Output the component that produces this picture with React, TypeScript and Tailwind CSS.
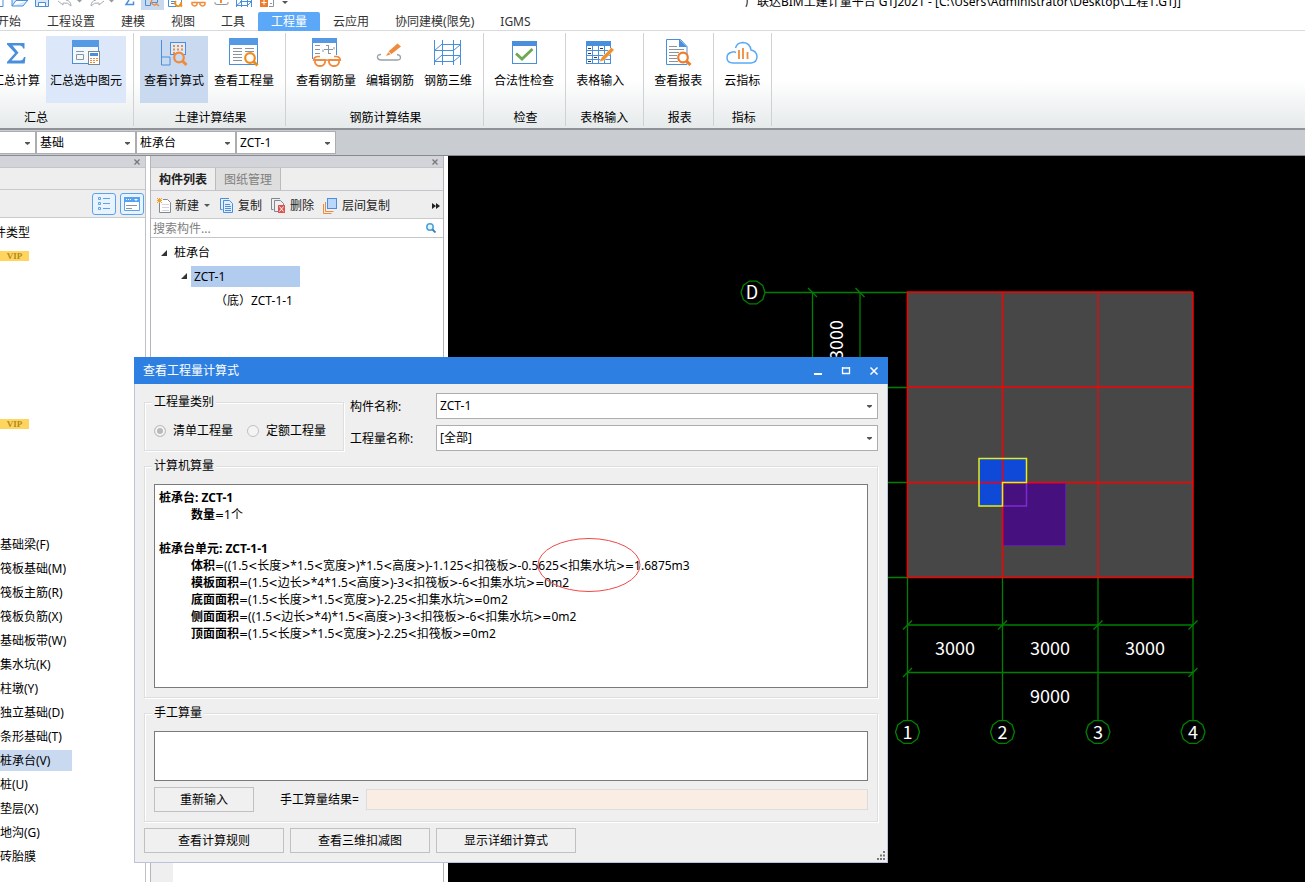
import React from 'react';
import clsx from 'clsx';

const BLUE = '#4a8fdc';
const ORANGE = '#f08a3c';

interface ComboProps {
  label: string;
  value: string;
  id?: string;
  className?: string;
}

const Combo: React.FC<ComboProps> = ({ label, value, id, className }) => (
  <div className={clsx('relative', className)}>
    <select
      id={id}
      aria-label={id ? undefined : label}
      className="block size-full appearance-none border border-[#adadad] bg-white pl-[3px] pr-5 text-black outline-none"
    >
      <option>{value}</option>
    </select>
    <svg className="pointer-events-none absolute right-[6px] top-1/2 -mt-px h-[3px] w-[5px]" viewBox="0 0 5 3">
      <path d="M0 0h5v1L2.500 3 0 1z" fill="#555" />
    </svg>
  </div>
);

const Magnifier = ({ x, y, color = ORANGE }: { x: number; y: number; color?: string }) => (
  <g stroke={color} fill="none">
    <circle cx={x} cy={y} r="4.800" strokeWidth="2.200" />
    <path d={`M${x + 3.5} ${y + 3.5}l4 4`} strokeWidth="3" />
  </g>
);

const icons: Record<string, React.ReactNode> = {
  sigma: <path d="M7 6h17.500v5.500h-1.500q-.5-3-3.500-3h-7l6 7.200-7 7.800h8.500q3 0 4-3.500h1.500l-.8 6.500H7v-1.500l8-9L7 7.500z" fill={BLUE} />,
  selected: (
    <>
      <rect x="2.500" y="3.500" width="26" height="23" fill="#f3f8fe" stroke={BLUE} />
      <path d="M2 3h27v7H2z" fill="#5598e4" />
      <path d="M6 14.500h8M6.500 17.500h7v5h-7z" fill="none" stroke="#8a949c" />
      <rect x="18.500" y="14.500" width="11" height="13" fill="#fff" stroke="#7b868e" />
      <path d="M20 16h8v3h-8z" fill={BLUE} />
      <path d="M20 21.500h8M20 23.500h8M20 25.500h5" stroke={ORANGE} strokeDasharray="2 1" />
    </>
  ),
  formula: (
    <>
      <path d="M3.500 3v25h8.500v-8H3.500" fill="none" stroke={BLUE} />
      <rect x="12.500" y="5.500" width="15" height="12" fill="#dfeafa" stroke={BLUE} />
      <path d="M15 9h11M15 12.500h11M15 16h4" stroke={ORANGE} strokeWidth="2" strokeDasharray="2 2" />
      <circle cx="21" cy="20.500" r="4" fill="#c9d9ef" />
      <Magnifier x={21} y={20.5} />
    </>
  ),
  quantity: (
    <>
      <rect x="1.500" y="1.500" width="28" height="26" fill="#fff" stroke={BLUE} />
      <path d="M1 1h29v7H1z" fill="#5598e4" />
      <path d="M5 11.500h9M17 11.500h9M5 14.500h9M17 14.500h9M5 17.500h9M5 20.500h9M5 23.500h9" stroke="#8a949c" />
      <circle cx="22" cy="21" r="5" fill="#fff" />
      <Magnifier x={22} y={21} color="#ef8d1c" />
    </>
  ),
  rebar: (
    <>
      <path d="M2.500 22V3.500h24V18" fill="#fff" stroke={BLUE} />
      <path d="M2 1h25v5H2z" fill="#5598e4" />
      <path d="M5 8.500h5M5 12.500h5M5 16.500h5M18.500 8v9M14 12.500h9M13 12.500v2.500M24 12.500V10M16 8.500h2.500M18.500 16.500H21" fill="none" stroke="#8a949c" />
      <path d="M3.500 24q0-4 4-4.500h2.500M30.500 24q0-4-4-4.500H24M15 23.500q2-1 4 0" fill="none" stroke={ORANGE} strokeWidth="1.500" />
      <path d="M5 23h10v2.500q-1 3.500-5 3.500t-5-3.500zM19 23h10v2.500q-1 3.500-5 3.500t-5-3.500z" fill="#fff" stroke={ORANGE} strokeWidth="1.800" />
    </>
  ),
  edit: (
    <>
      <path d="M7 17.500q-4 0-3.500 3 .5 2.500 3.500 2.500h16q3.500 0 3.500-2.500t-3.500-3" fill="none" stroke="#98a3aa" strokeWidth="1.300" />
      <path d="M12 19l3-5 8.500-7.500 3.500 3L17.500 17z" fill={ORANGE} />
      <path d="M14 14.500l3 2.700" stroke="#fff" />
    </>
  ),
  cage: (
    <path
      d="M2.500 3v25M10.500 3v25M21.500 3v25M28.500 3v25M2 13.500h20M2 24.500h20M9 7.500h20M9 18.500h20M2.500 13.500l7-6M21.500 13.500l7-6M2.500 24.500l7-6M21.500 24.500l7-6"
      fill="none"
      stroke={BLUE}
    />
  ),
  check: (
    <>
      <rect x="4.500" y="4.500" width="24" height="22" fill="#fff" stroke={BLUE} />
      <path d="M4 4h25v5H4z" fill={BLUE} />
      <path d="M8 16.500l6 5.500L24.500 12" fill="none" stroke="#6fa84f" strokeWidth="2.800" />
    </>
  ),
  table: (
    <>
      <rect x="2.500" y="4.500" width="24" height="22" fill="#fff" stroke={BLUE} />
      <path d="M2 4h25v5H2z" fill={BLUE} />
      <path d="M3 13.500h23M3 18.500h23M3 22.500h23M8.500 9v18M14.500 9v18M20.500 9v18" stroke={BLUE} />
      <path d="M4 11.500h3M16 11.500h3M4 16.500h3M10 20.500h3M4 24.500h3" stroke="#335" />
      <path d="M15 25l2.500-4.500L27.500 10.500l2.800 2.500L20 23.500z" fill="#f0912a" stroke="#fff" strokeWidth=".5" />
    </>
  ),
  report: (
    <>
      <path d="M4.500 2.500h14l6.500 7v18h-20.500z" fill="#fff" stroke={BLUE} />
      <path d="M17 2l8 8h-8z" fill={BLUE} />
      <path d="M7 9.500h8M7 12.500h15M7 15.500h10M7 18.500h8M7 21.500h8M7 24.500h9" stroke="#8a949c" />
      <circle cx="21" cy="20.500" r="5" fill="#fff" />
      <Magnifier x={21} y={20.5} color="#ee7c2c" />
    </>
  ),
  cloud: (
    <>
      <path d="M10 15.500Q8 14.500 6.500 15 1 16 1 20.500 1 26 7 26h18q6-.5 6-6.500-.5-5.500-6-6.500Q24 6 17 5.500 11 5.500 9.500 11" fill="none" stroke="#5aaaf5" strokeWidth="1.500" />
      <path d="M13 13v9M17 11v11M21.500 15v7" stroke={ORANGE} strokeWidth="1.800" />
    </>
  ),
};

interface Tool {
  icon: string;
  label: string;
  state?: 'hover' | 'active';
}

const groups: { title: string; className: string; tools: Tool[] }[] = [
  {
    title: '汇总',
    className: '-ml-[62px] pl-[50px] pr-[7px]',
    tools: [
      { icon: 'sigma', label: '汇总计算' },
      { icon: 'selected', label: '汇总选中图元', state: 'hover' },
    ],
  },
  {
    title: '土建计算结果',
    className: 'pl-[6px] pr-[7px]',
    tools: [
      { icon: 'formula', label: '查看计算式', state: 'active' },
      { icon: 'quantity', label: '查看工程量' },
    ],
  },
  {
    title: '钢筋计算结果',
    className: 'pl-[6px] pr-[7px]',
    tools: [
      { icon: 'rebar', label: '查看钢筋量' },
      { icon: 'edit', label: '编辑钢筋' },
      { icon: 'cage', label: '钢筋三维' },
    ],
  },
  { title: '检查', className: 'pl-[6px] pr-[7px]', tools: [{ icon: 'check', label: '合法性检查' }] },
  { title: '表格输入', className: 'pl-[6px] pr-[15px]', tools: [{ icon: 'table', label: '表格输入' }] },
  { title: '报表', className: 'pl-[6px] pr-[7px]', tools: [{ icon: 'report', label: '查看报表' }] },
  { title: '指标', className: 'pl-[6px] pr-[7px]', tools: [{ icon: 'cloud', label: '云指标' }] },
];

const tabs = ['开始', '工程设置', '建模', '视图', '工具', '工程量', '云应用', '协同建模(限免)', 'IGMS'];

const quickTools: { name: string; art: React.ReactNode; active?: boolean; narrow?: boolean }[] = [
  { name: '新建', art: <path d="M8 0v6.500h10V0" fill="none" stroke={BLUE} /> },
  { name: '打开', art: <path d="M4 0v6h11l5-6M4 6l4-5.500h12" fill="#d8e9fb" stroke={BLUE} /> },
  { name: '保存', art: <path d="M4.500 0v6.500h13V0M7.500 6V2.500h7V6" fill="#d8e9fb" stroke={BLUE} /> },
  { name: '撤销', art: <path d="M4 1l5 4V3q5-1 8 3 0-5-5-6" fill="none" stroke="#a5acb2" /> },
  { name: '撤销列表', narrow: true, art: <path d="M0 0h5L2.500 2.500z" fill="#999" /> },
  { name: '恢复', art: <path d="M18 1l-5 4V3Q8 2 5 6q0-5 5-6" fill="none" stroke="#a5acb2" /> },
  { name: '恢复列表', narrow: true, art: <path d="M0 0h5L2.500 2.500z" fill="#999" /> },
  { name: '汇总计算', art: <path d="M11 0l-3 4.500h7.500V1.500" fill="none" stroke={BLUE} strokeWidth="1.500" /> },
  {
    name: '查看计算式',
    active: true,
    art: (
      <>
        <path d="M4.500 0v5.500h5V2.500h7V0" fill="none" stroke={BLUE} />
        <path d="M11 0a3 3 0 0 0 5 3.500M15 3.500l3 2.500" fill="none" stroke={ORANGE} strokeWidth="1.500" />
      </>
    ),
  },
  {
    name: '查看工程量',
    art: (
      <>
        <path d="M4.500 0v6.500h8M17.500 0v2M7 1.500h4M7 3.500h4" fill="none" stroke={BLUE} />
        <path d="M12 1a3 3 0 1 0 5 1M15.500 4l2.500 2.500" fill="none" stroke="#ef8d1c" strokeWidth="1.800" />
      </>
    ),
  },
  { name: '查看钢筋量', art: <path d="M5 2.500h5v2q-2 3-5 0zM13 2.500h5v2q-2 3-5 0zM10 2.500h3" fill="none" stroke={ORANGE} strokeWidth="1.400" /> },
  {
    name: '编辑钢筋',
    art: (
      <>
        <path d="M5 2q-1 2.500 2 2.500h9q3 0 2-2.500" fill="none" stroke="#8a949c" />
        <path d="M11 0v3" stroke={ORANGE} strokeWidth="2" />
      </>
    ),
  },
  { name: '钢筋三维', art: <path d="M3.500 0v7M8.500 0v7M14.500 0v7M18.500 0v7M3 5.500h12M7 1.500h12M3.500 5.500l5-4M14.500 5.500l4-4" stroke={BLUE} /> },
  {
    name: '插件',
    art: (
      <>
        <path d="M4 0h8v7H4z" fill="#ee7c2c" />
        <path d="M8 0v5M5.500 2.500h5" stroke="#fff" />
        <path d="M13 6.500h4.500V0M14 3.500h2" fill="none" stroke="#8a949c" />
      </>
    ),
  },
  { name: '自定义', narrow: true, art: <path d="M3 1h6L6 4z" fill="#555" /> },
];

const TitleBar = () => (
  <header className="flex h-[12px] items-end overflow-hidden bg-white">
    <div className="-ml-[15px] flex h-[12px]">
      {quickTools.map((t) => (
        <button key={t.name} aria-label={t.name} className={clsx('h-[10px]', t.active && 'bg-[#c9daef]')}>
          {t.narrow ? (
            <svg className="h-[10px] w-[9px]" viewBox="0 0 9 10">{t.art}</svg>
          ) : (
            <svg className="h-[10px] w-[23px]" viewBox="0 0 23 10">{t.art}</svg>
          )}
        </button>
      ))}
    </div>
    <h1 className="ml-auto mr-[124px] whitespace-nowrap pb-[2px] leading-4">
      广联达BIM土建计量平台 GTJ2021 - [C:\Users\Administrator\Desktop\工程1.GTJ]
    </h1>
  </header>
);

const Ribbon = () => (
  <>
    <nav className="flex h-[19px] border-b border-[#d9dadb] bg-white">
      <div className="-ml-4 flex">
        {tabs.map((tab) => (
          <button
            key={tab}
            className={clsx(
              'h-[19px] whitespace-nowrap px-[13px] leading-[19px]',
              tab === '工程量' ? 'rounded-t-xs bg-[#5ba7f8] text-white' : 'text-[#333]',
            )}
          >
            {tab}
          </button>
        ))}
      </div>
    </nav>
    <div className="flex h-[97px] bg-linear-to-b from-white from-50% to-[#e6eaeb] py-[2px]">
      {groups.map((g) => (
        <section
          key={g.title}
          className={clsx('flex flex-col items-center border-r border-[#cfd1d3] pt-[3px]', g.className)}
        >
          <div className="flex w-full gap-[2px]">
            {g.tools.map((t) => (
              <button
                key={t.label}
                className={clsx(
                  'flex h-[67px] flex-col items-center whitespace-nowrap px-[4px] pt-px',
                  t.state === 'hover' && 'bg-[#dce8f9]',
                  t.state === 'active' && 'bg-[#c9d9ef]',
                )}
              >
                <svg className="size-8" viewBox="0 0 32 32">{icons[t.icon]}</svg>
                <span className="mt-[4px] leading-4">{t.label}</span>
              </button>
            ))}
          </div>
          <h2 className={clsx('mt-[7px] leading-4', g.title === '表格输入' ? 'pl-[8px]' : 'pl-[3px]', g.title === '汇总' && '-ml-[45px]')}>
            {g.title}
          </h2>
        </section>
      ))}
    </div>
  </>
);

const CloseStrip = () => (
  <div className="flex h-[12px] items-center justify-end border-b border-[#c3c5ca] bg-[#d3d4da] pr-[5px] pt-px">
    <button aria-label="关闭" className="block">
      <svg className="size-[6px]" viewBox="0 0 6 6">
        <path d="M.5.5l5 5M5.500.5l-5 5" stroke="#777" strokeWidth="1.300" />
      </svg>
    </button>
  </div>
);

const navRows = [
  '构件类型', 'VIP', '', '', '', '', '', '', 'VIP', '', '', '', '',
  '基础梁(F)', '筏板基础(M)', '筏板主筋(R)', '筏板负筋(X)', '基础板带(W)', '集水坑(K)', '柱墩(Y)',
  '独立基础(D)', '条形基础(T)', '桩承台(V)', '桩(U)', '垫层(X)', '地沟(G)', '砖胎膜',
];

const NavPanel = () => (
  <aside className="flex w-[146px] shrink-0 flex-col border-r border-[#bfc1c6] bg-white">
    <CloseStrip />
    <div className="h-[22px] border-b border-[#c9cacc] bg-[#eee]" />
    <div className="flex h-[28px] items-center justify-end gap-[4px] border-b border-[#c9cacc] bg-[#eee] pr-px">
      <button aria-label="列表视图" className="flex h-[22px] w-[24px] items-center justify-center rounded-[3px] border border-[#57a3f2] bg-[#e8f3fe]">
        <svg className="h-[14px] w-[12px]" viewBox="0 0 12 14">
          <path d="M.5.500h2v2h-2zM.5 5.500h2v2h-2zM.5 10.500h2v2h-2zM5 1.500h7M5 6.500h7M5 11.500h7" fill="none" stroke="#57a3f2" />
        </svg>
      </button>
      <button aria-label="卡片视图" className="flex h-[22px] w-[24px] items-center justify-center rounded-[3px] border border-[#57a3f2] bg-[#e8f3fe]">
        <svg className="h-[14px] w-[16px]" viewBox="0 0 16 14">
          <path d="M.5.500h15v13H.5z" fill="#fff" stroke="#57a3f2" />
          <path d="M0 0h16v5H0z" fill="#57a3f2" />
          <path d="M2 2.500h5" stroke="#fff" strokeDasharray="1 1" />
          <path d="M10 2h4l-2 2z" fill="#fff" />
          <path d="M2 8.500h11M2 11.500h6" stroke="#8a949c" />
        </svg>
      </button>
    </div>
    <ul className="pt-[2px]">
      {navRows.map((row, i) => (
        <li key={i} className="flex h-[24px] items-center">
          {row === 'VIP' && (
            <span className="flex h-[10px] w-[29px] items-center justify-center bg-[#ffd55f] font-['Liberation_Serif',serif] text-[9px] font-bold text-[#b08a1c]">
              VIP
            </span>
          )}
          {row && row !== 'VIP' && (
            <span
              className={clsx(
                'h-[21px] whitespace-nowrap leading-[21px]',
                row === '构件类型' && '-ml-[18px]',
                row === '桩承台(V)' && 'w-[72px] bg-[#c9d9ef]',
              )}
            >
              {row}
            </span>
          )}
        </li>
      ))}
    </ul>
  </aside>
);

const TreeArrow = () => (
  <svg className="size-[6px]" viewBox="0 0 6 6">
    <path d="M6 0v6H0z" fill="#333" />
  </svg>
);

const ComponentPanel = () => (
  <section className="ml-[4px] flex w-[294px] shrink-0 flex-col border-x border-[#b3b5b9] bg-white">
    <CloseStrip />
    <div className="flex h-[23px] border-b border-[#c3c5ca] bg-[#eee]">
      <button className="w-[65px] border-r border-[#bbb] pt-[2px] font-bold text-[#222]">构件列表</button>
      <button className="w-[65px] border-r border-[#bbb] bg-[#dedede] pt-[2px] text-[#808080]">图纸管理</button>
    </div>
    <div className="flex h-[28px] items-center border-b border-[#c9cacc] bg-[#eee] pl-[6px] pr-[3px] pt-[2px] text-[#222]">
      <button className="flex items-center gap-[4px] whitespace-nowrap">
        <svg className="h-[16px] w-[14px]" viewBox="0 0 14 16">
          <path d="M2.500 5v9.500h11v-10l-3-3H6" fill="#fff" stroke="#7d8890" />
          <path d="M5 6.500h7M5 9.500h7M5 12.500h7" stroke="#d5cfe0" />
          <path d="M0 0l5 5M5 0L0 5M2.500 0v5M0 2.500h5" stroke="#f0a02c" />
        </svg>
        新建
        <svg className="ml-px h-[3px] w-[6px]" viewBox="0 0 6 3">
          <path d="M0 0h6L3 3z" fill="#555" />
        </svg>
      </button>
      <button className="ml-[10px] flex items-center gap-[5px] whitespace-nowrap">
        <svg className="h-[15px] w-[13px]" viewBox="0 0 13 15">
          <path d="M9 .5H.500v11h2" fill="none" stroke={BLUE} />
          <path d="M3.500 2.500h6l3 3v9h-9z" fill="#e3effc" stroke={BLUE} />
          <path d="M5 6.500h5M5 8.500h6M5 10.500h6M5 12.500h6" stroke={BLUE} />
        </svg>
        复制
      </button>
      <button className="ml-[9px] flex items-center gap-[4px] whitespace-nowrap">
        <svg className="h-[15px] w-[15px]" viewBox="0 0 15 15">
          <path d="M9 .5H.500v11h2M7 13.500H3.500v-11h6l3 3v2" fill="none" stroke="#7d8890" />
          <path d="M7 7h7v8H7z" fill="#d9534f" />
          <path d="M8.500 8.500l4 5M12.500 8.500l-4 5" stroke="#fff" />
        </svg>
        删除
      </button>
      <button className="ml-[9px] flex items-center gap-[5px] whitespace-nowrap">
        <svg className="h-[16px] w-[14px]" viewBox="0 0 14 16">
          <path d="M2.500 4v9.500h8M.5 6v9.500h8" fill="none" stroke={ORANGE} />
          <rect x="4.500" y=".5" width="9" height="10" fill="#b9d8fb" stroke={BLUE} />
        </svg>
        层间复制
      </button>
      <button aria-label="更多" className="ml-auto">
        <svg className="h-[6px] w-[8px]" viewBox="0 0 8 6">
          <path d="M0 0l4 3-4 3zM4 0l4 3-4 3z" fill="#222" />
        </svg>
      </button>
    </div>
    <div className="flex h-[19px] items-center border-b border-[#c3c5ca] pl-[2px] pr-[7px]">
      <input
        type="text"
        aria-label="搜索构件"
        placeholder="搜索构件..."
        className="h-[18px] min-w-0 flex-1 pt-px leading-4 outline-none placeholder:text-[#808080]"
      />
      <svg className="size-[10px]" viewBox="0 0 10 10">
        <circle cx="4" cy="4" r="3.200" fill="#e6f4fc" stroke="#4aa0d8" strokeWidth="1.500" />
        <path d="M6.500 6.500l3 3" stroke="#2f7fb8" strokeWidth="1.800" />
      </svg>
    </div>
    <ul className="flex-1 pt-[2px]">
      <li className="flex h-[24px] items-center gap-[7px] pl-[10px] pt-px"><TreeArrow />桩承台</li>
      <li className="flex h-[24px] items-center gap-[4px] pl-[30px]">
        <TreeArrow />
        <span className="h-[21px] w-[109px] bg-[#b1ccee] pl-[3px] leading-[21px]">ZCT-1</span>
      </li>
      <li className="flex h-[24px] items-center pl-[64px] pt-px">（底）ZCT-1-1</li>
    </ul>
    <div className="h-[60px] w-[22px] bg-[#efefef]" />
  </section>
);

const axisX = [907.5, 1002.5, 1098, 1193];
const axisY = [292, 387, 482.5, 577.5];

const ringPoints = (cx: number, cy: number) =>
  Array.from({ length: 10 }, (_, i) => {
    const a = ((i + 0.5) * Math.PI) / 5;
    return `${cx + 12 * Math.cos(a + Math.PI / 10)},${cy + 12 * Math.sin(a + Math.PI / 10)}`;
  }).join(' ');

const Drawing = () => (
  <main className="ml-[4px] min-w-0 flex-1 bg-black">
    <svg className="block size-full" aria-label="轴网平面图">
      {/* Drawing units are window pixels, the view starts at 448,156 */}
      <g transform="translate(-448 -156)" fontFamily="'Noto Sans CJK SC', sans-serif" fontSize="18" textAnchor="middle">
        <g stroke="#008000" strokeWidth="1.300" fill="none">
          <path d="M765 292.500H907M812.500 292v90M860 292v90M880 387.500h28M880 482.500h28M880 577.500h28" />
          <path d="M808 288l9 9M855.500 288l9 9" />
          {axisX.map((x) => <path key={x} d={`M${x} 577V720`} />)}
          <path d="M907 625H1193M907 672.500H1193" />
          {axisX.map((x) => <path key={x} d={`M${x - 4.5} 629.500l9-9`} />)}
          <path d="M903 677l9-9M1188.500 677l9-9" />
          <polygon points={ringPoints(753, 292.5)} />
          {axisX.map((x) => <polygon key={x} points={ringPoints(x, 732)} />)}
        </g>
        <rect x="907" y="292" width="286" height="286" fill="#474747" />
        <rect x="1003" y="483" width="62.500" height="62.500" fill="#46117f" stroke="#5b1fa8" />
        <path d="M979 459h48v24h-24v23h-24z" fill="#0f49d8" />
        <path d="M1026.500 483v23h-24" fill="none" stroke="#7d2bd0" strokeWidth="1.500" />
        <g stroke="#fa0000" strokeWidth="1.500">
          {axisX.map((x) => (
            <path key={x} d={`M${x} 292V578`} stroke={x === 1098 ? '#d01212' : '#fa0000'} />
          ))}
          {axisY.map((y) => <path key={y} d={`M907 ${y}H1193`} />)}
        </g>
        <path d="M979 458.500h47.500v24h-24v23.500H979z" fill="none" stroke="#e6ee12" strokeWidth="1.500" />
        <g fill="#fff">
          <text x="752" y="299">D</text>
          <text transform="translate(843 340) rotate(-90)">3000</text>
          {['1', '2', '3', '4'].map((n, i) => <text key={n} x={axisX[i]} y="739">{n}</text>)}
          <text x="955" y="655">3000</text>
          <text x="1050" y="655">3000</text>
          <text x="1145" y="655">3000</text>
          <text x="1050" y="703">9000</text>
        </g>
      </g>
    </svg>
  </main>
);

const formulas = [
  { name: '体积', text: '=((1.5<长度>*1.5<宽度>)*1.5<高度>)-1.125<扣筏板>-0.5625<扣集水坑>=1.6875m3' },
  { name: '模板面积', text: '=(1.5<边长>*4*1.5<高度>)-3<扣筏板>-6<扣集水坑>=0m2' },
  { name: '底面面积', text: '=(1.5<长度>*1.5<宽度>)-2.25<扣集水坑>=0m2' },
  { name: '侧面面积', text: '=((1.5<边长>*4)*1.5<高度>)-3<扣筏板>-6<扣集水坑>=0m2' },
  { name: '顶面面积', text: '=(1.5<长度>*1.5<宽度>)-2.25<扣筏板>=0m2' },
];

// Comparison signs are set in a face with wider operators
const Formula = ({ text }: { text: string }) => (
  <>
    {text.split(/([<>=])/).map((part, i) =>
      i % 2 ? (
        <span key={i} className="font-['DejaVu_Sans_Condensed','DejaVu_Sans',sans-serif] leading-none">{part}</span>
      ) : (
        part
      ),
    )}
  </>
);

interface GroupBoxProps {
  title: string;
  className?: string;
  children: React.ReactNode;
}

const GroupBox: React.FC<GroupBoxProps> = ({ title, className, children }) => (
  <fieldset
    className={clsx(
      'min-w-0 border border-[#dedede] px-[9px] pb-[9px] shadow-[inset_1px_1px_0_#fff,1px_1px_0_#fff]',
      className,
    )}
  >
    <legend className="-ml-[2px] h-[18px] bg-[#efefef] px-[2px] leading-[18px]">{title}</legend>
    {children}
  </fieldset>
);

const buttonClass = 'h-[25px] border border-[#c0c0c0] bg-[#f0f0f0]';
const radioClass =
  'size-[12px] appearance-none rounded-full border border-[#c0c0c0] bg-[#f4f4f4] shadow-[inset_0_0_0_2px_#f4f4f4] checked:bg-[#b9b9b9]';

const FormulaDialog = () => (
  <div role="dialog" aria-label="查看工程量计算式" className="absolute left-[134px] top-[357px] w-[754px] bg-[#efefef]">
    <div className="flex h-[27px] items-center bg-[#2d80e2] px-[9px] text-white">
      <h2 className="flex-1">查看工程量计算式</h2>
      <div className="flex gap-[18px]">
        <button aria-label="最小化">
          <svg className="size-[10px]" viewBox="0 0 10 10"><path d="M1 8h8" stroke="#fff" strokeWidth="2" /></svg>
        </button>
        <button aria-label="最大化">
          <svg className="size-[10px]" viewBox="0 0 10 10"><path d="M1.500 1v6.500h7V1M1 2h8" fill="none" stroke="#fff" strokeWidth="1.300" /></svg>
        </button>
        <button aria-label="关闭">
          <svg className="size-[10px]" viewBox="0 0 10 10"><path d="M1.500 1.500l7 7M8.500 1.500l-7 7" stroke="#fff" strokeWidth="1.500" /></svg>
        </button>
      </div>
    </div>

    <div className="flex flex-col gap-[6px] border border-t-0 border-[#bcc3d8] p-[9px]">
      <div className="flex gap-[6px]">
        <GroupBox title="工程量类别" className="h-[58px] w-[200px]">
          <div className="flex gap-[14px] pt-[11px]">
            <label className="flex items-center gap-[7px] leading-[18px]">
              <input type="radio" name="kind" disabled defaultChecked className={radioClass} />
              清单工程量
            </label>
            <label className="flex items-center gap-[7px] leading-[18px]">
              <input type="radio" name="kind" disabled className={radioClass} />
              定额工程量
            </label>
          </div>
        </GroupBox>
        <div className="grid flex-1 grid-cols-[80px_1fr] items-center gap-[6px]">
          <label htmlFor="component" className="pt-[2px]">构件名称:</label>
          <Combo id="component" label="构件名称" value="ZCT-1" className="h-[26px]" />
          <label htmlFor="quantity" className="pt-[2px]">工程量名称:</label>
          <Combo id="quantity" label="工程量名称" value="[全部]" className="h-[26px]" />
        </div>
      </div>

      <GroupBox title="计算机算量">
        <div className="relative mt-[9px] h-[204px] border border-[#7a7a7a] bg-white p-[4px] leading-[17px]">
          <p className="font-bold">桩承台: ZCT-1</p>
          <p className="pl-[32px]"><b>数量</b><Formula text="=1个" /></p>
          <p className="mt-[17px] font-bold">桩承台单元: ZCT-1-1</p>
          {formulas.map((f) => (
            <p key={f.name} className="whitespace-nowrap pl-[32px]"><b>{f.name}</b><Formula text={f.text} /></p>
          ))}
          <svg className="pointer-events-none absolute left-[382px] top-[52px] h-[56px] w-[104px]" viewBox="0 0 104 56">
            <ellipse cx="52" cy="28" rx="51" ry="26.500" fill="none" stroke="#f04848" />
          </svg>
        </div>
      </GroupBox>

      <GroupBox title="手工算量">
        <textarea aria-label="手工算量" className="mt-[9px] block h-[50px] w-full resize-none border border-[#7a7a7a] bg-white outline-none" />
        <div className="mt-[6px] flex items-center">
          <button className={clsx(buttonClass, 'w-[100px]')}>重新输入</button>
          <label htmlFor="result" className="ml-[26px] w-[86px]">手工算量结果=</label>
          <input id="result" type="text" readOnly className="h-[21px] min-w-0 flex-1 border border-[#dcdcdc] bg-[#faeee4]" />
        </div>
      </GroupBox>

      <div className="flex gap-[6px]">
        <button className={clsx(buttonClass, 'w-[140px]')}>查看计算规则</button>
        <button className={clsx(buttonClass, 'w-[140px]')}>查看三维扣减图</button>
        <button className={clsx(buttonClass, 'w-[140px]')}>显示详细计算式</button>
      </div>
    </div>
    <svg className="absolute bottom-[3px] right-[3px] size-[9px]" viewBox="0 0 9 9">
      <path d="M7 1h2M4 4.500h2M7 4.500h2M1 8h2M4 8h2M7 8h2" stroke="#777" strokeWidth="2" />
    </svg>
  </div>
);

const App: React.FC = () => (
  <div className="relative flex h-screen min-h-[863px] flex-col overflow-hidden bg-white font-['Noto_Sans','Noto_Sans_CJK_SC',sans-serif] text-[12px] leading-4 text-black">
    <TitleBar />
    <Ribbon />
    <div className="flex h-[28px] border-b border-t-2 border-b-[#868a92] border-t-[#8f9399] bg-[#c9ccd1] pt-px">
      <Combo label="楼层" value=" " className="-ml-[64px] h-[23px] w-[100px]" />
      <Combo label="构件类别" value="基础" className="h-[23px] w-[100px]" />
      <Combo label="构件类型" value="桩承台" className="h-[23px] w-[100px]" />
      <Combo label="构件" value="ZCT-1" className="h-[23px] w-[100px]" />
    </div>
    <div className="flex min-h-0 flex-1">
      <NavPanel />
      <ComponentPanel />
      <Drawing />
    </div>
    <FormulaDialog />
  </div>
);

export default App;
